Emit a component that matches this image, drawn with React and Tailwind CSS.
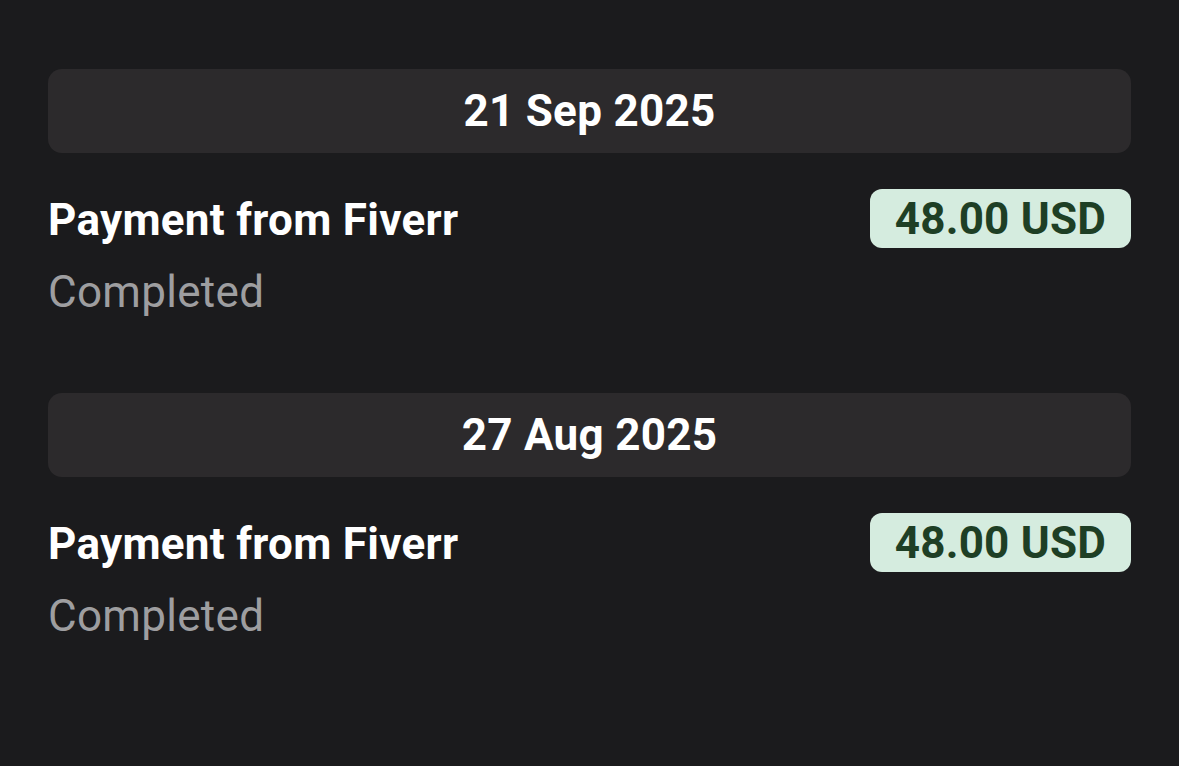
const transactions = [
  { date: "21 Sep 2025", title: "Payment from Fiverr", status: "Completed", amount: "48.00 USD" },
  { date: "27 Aug 2025", title: "Payment from Fiverr", status: "Completed", amount: "48.00 USD" },
];

const App = () => {
  return (
    <div
      className="min-h-[766px] bg-[#1b1b1d] px-[48px] pt-[69px]"
      style={{ fontFamily: "Roboto, 'Noto Sans', sans-serif" }}
    >
      <div className="flex flex-col gap-[75px]">
        {transactions.map((tx, index) => (
          <div key={index}>
            {/* Date header */}
            <div className="h-[84px] rounded-[14px] bg-[#2c2a2c] flex items-center justify-center">
              <span className="text-[44px] leading-[52px] font-bold tracking-[0.3px] text-white">{tx.date}</span>
            </div>

            {/* Row */}
            <div className="mt-[36px] flex items-start justify-between">
              <div>
                <p className="text-[44px] leading-[62px] font-bold tracking-[0.3px] text-white">{tx.title}</p>
                <p className="mt-[15px] text-[44px] leading-[52px] tracking-[0.3px] text-[#9e9ea0]">{tx.status}</p>
              </div>
              <span className="h-[59px] px-[25px] rounded-[12px] bg-[#d5ecdf] flex items-center text-[44px] font-bold tracking-[0.2px] text-[#1e3f25]">
                {tx.amount}
              </span>
            </div>
          </div>
        ))}
      </div>
    </div>
  );
};

export default App;
